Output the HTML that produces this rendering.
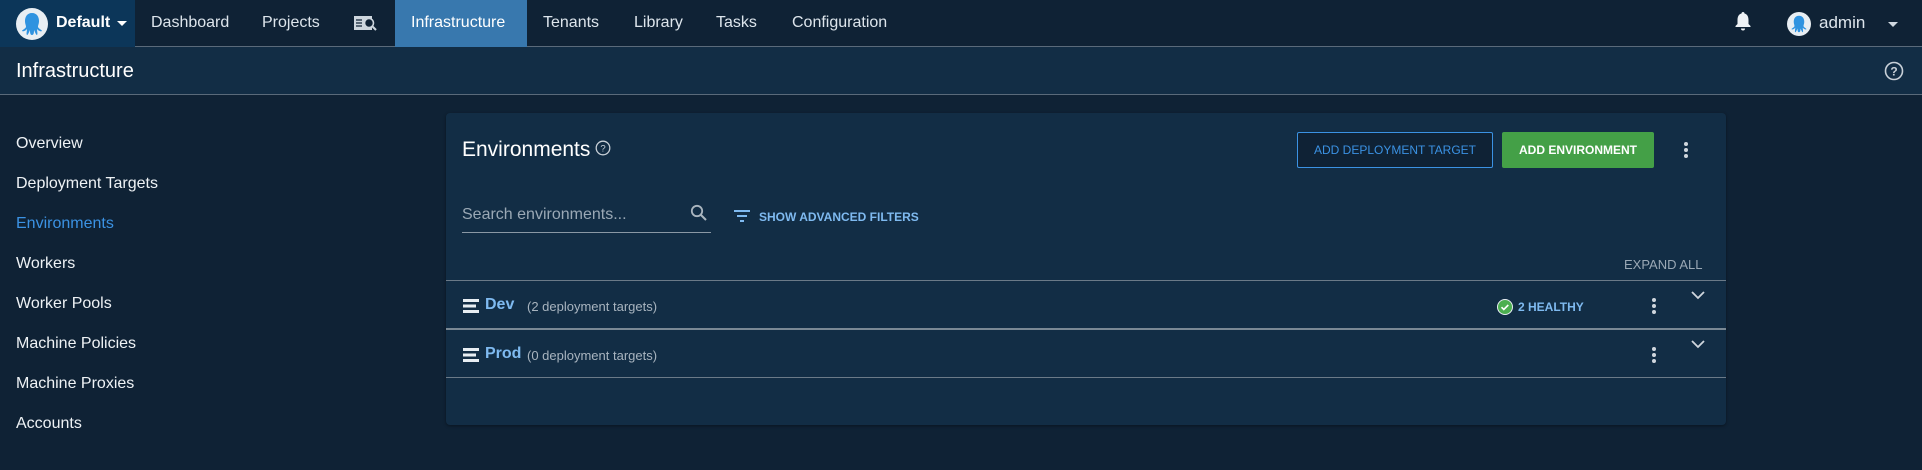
<!DOCTYPE html>
<html><head><meta charset="utf-8"><style>
*{box-sizing:border-box;margin:0;padding:0}
body{width:1922px;height:470px;background:#0f2235;font-family:"Liberation Sans",sans-serif;color:#e6edf3;position:relative;overflow:hidden}
.a{position:absolute;white-space:nowrap}
.nav{position:absolute;left:0;top:0;width:1922px;height:47px;background:#0f2235;border-bottom:1px solid #5a6a7a}
.navt{font-size:16px;color:#dde5ec;top:14px}
.tb{position:absolute;left:0;top:47px;width:1922px;height:48px;background:#122d45;border-bottom:1px solid #5a6a7a}
.side{font-size:16px;color:#eef2f5}
.card{position:absolute;left:446px;top:113px;width:1280px;height:312px;background:#122d45;border-radius:4px;box-shadow:0 1px 3px rgba(0,0,0,.4)}
.ln{position:absolute;left:446px;width:1280px;height:1px;background:#6b7a88}
</style></head><body>
<div class="nav"></div>
<div class="a" style="left:0;top:0;width:135px;height:47px;background:#0c3659"></div>
<svg class="a" style="left:16px;top:8px" width="32" height="32" viewBox="0 0 32 32"><circle cx="16" cy="16" r="16" fill="#e8eef3"/><path d="M16 5c-5 0-7 4-7 8 0 3 1 4 1 6-1 2-4 3-4 4 2 1 4-1 5-2 0 2-1 5 0 6 1 0 2-3 3-5 0 2 0 5 2 5s2-3 2-5c1 2 2 5 3 5 1-1 0-4 0-6 1 1 3 3 5 2 0-1-3-2-4-4 0-2 1-3 1-6 0-4-2-8-7-8z" fill="#2f93e0"/></svg>
<div class="a" style="left:56px;top:14px;font-size:16px;font-weight:bold;color:#fff">Default</div>
<div class="a" style="left:117px;top:21px;border-left:5px solid transparent;border-right:5px solid transparent;border-top:5px solid #fff"></div>
<div class="a navt" style="left:151px">Dashboard</div>
<div class="a navt" style="left:262px">Projects</div>
<svg class="a" style="left:354px;top:15px" width="24" height="17" viewBox="0 0 24 17"><rect x="0" y="1" width="18" height="14" fill="#cdd6de"/><circle cx="15" cy="8" r="4.5" fill="#0f2235" stroke="#cdd6de" stroke-width="1.6"/><path d="M18 11l4 4" stroke="#cdd6de" stroke-width="2"/><path d="M2 5h6M2 8h6M2 11h6" stroke="#0f2235" stroke-width="1.3"/></svg>
<div class="a" style="left:395px;top:0;width:132px;height:47px;background:#3878ae"></div>
<div class="a navt" style="left:411px;color:#fff">Infrastructure</div>
<div class="a navt" style="left:543px">Tenants</div>
<div class="a navt" style="left:634px">Library</div>
<div class="a navt" style="left:716px">Tasks</div>
<div class="a navt" style="left:792px">Configuration</div>
<svg class="a" style="left:1734px;top:11px" width="18" height="20" viewBox="0 0 18 20"><path d="M9 1c-1 0-1.5.7-1.5 1.5C4.5 3.3 3.5 6 3.5 9v4L1.5 15v1h15v-1l-2-2V9c0-3-1-5.7-4-6.5C10.5 1.7 10 1 9 1z" fill="#eef2f5"/><path d="M7 17.5a2 2 0 0 0 4 0z" fill="#eef2f5"/></svg>
<svg class="a" style="left:1787px;top:12px" width="24" height="24" viewBox="0 0 32 32"><circle cx="16" cy="16" r="16" fill="#e8eef3"/><path d="M16 5c-5 0-7 4-7 8 0 3 1 4 1 6-1 2-4 3-4 4 2 1 4-1 5-2 0 2-1 5 0 6 1 0 2-3 3-5 0 2 0 5 2 5s2-3 2-5c1 2 2 5 3 5 1-1 0-4 0-6 1 1 3 3 5 2 0-1-3-2-4-4 0-2 1-3 1-6 0-4-2-8-7-8z" fill="#2f93e0"/></svg>
<div class="a navt" style="left:1819px;top:13px;font-size:17px">admin</div>
<div class="a" style="left:1888px;top:22px;border-left:5px solid transparent;border-right:5px solid transparent;border-top:5px solid #cfd8e0"></div>

<div class="tb"></div>
<div class="a" style="left:16px;top:60px;font-size:20px;color:#fff">Infrastructure</div>
<svg class="a" style="left:1884px;top:61px" width="20" height="20" viewBox="0 0 20 20"><circle cx="10" cy="10" r="8.5" fill="none" stroke="#c8d0d8" stroke-width="1.6"/><text x="10" y="14.5" font-size="12" font-family="Liberation Sans" font-weight="bold" fill="#c8d0d8" text-anchor="middle">?</text></svg>

<div class="a side" style="left:16px;top:135px">Overview</div>
<div class="a side" style="left:16px;top:175px">Deployment Targets</div>
<div class="a side" style="left:16px;top:215px;color:#3b92e3">Environments</div>
<div class="a side" style="left:16px;top:255px">Workers</div>
<div class="a side" style="left:16px;top:295px">Worker Pools</div>
<div class="a side" style="left:16px;top:335px">Machine Policies</div>
<div class="a side" style="left:16px;top:375px">Machine Proxies</div>
<div class="a side" style="left:16px;top:415px">Accounts</div>

<div class="card"></div>
<div class="a" style="left:462px;top:138px;font-size:21px;color:#fff">Environments</div>
<svg class="a" style="left:595px;top:140px" width="16" height="16" viewBox="0 0 20 20"><circle cx="10" cy="10" r="8.5" fill="none" stroke="#c8d0d8" stroke-width="1.6"/><text x="10" y="14.5" font-size="12" font-family="Liberation Sans" fill="#c8d0d8" text-anchor="middle">?</text></svg>
<div class="a" style="left:1297px;top:132px;width:196px;height:36px;border:1px solid #3b92e3;border-radius:2px;background:#0f2235;color:#3b92e3;font-size:12px;text-align:center;line-height:34px">ADD DEPLOYMENT TARGET</div>
<div class="a" style="left:1502px;top:132px;width:152px;height:36px;background:#44a047;border-radius:2px;color:#fff;font-size:12px;font-weight:bold;text-align:center;line-height:36px">ADD ENVIRONMENT</div>
<svg class="a" style="left:1683px;top:140px" width="6" height="20"><circle cx="3" cy="4" r="2" fill="#cfd6dd"/><circle cx="3" cy="10" r="2" fill="#cfd6dd"/><circle cx="3" cy="16" r="2" fill="#cfd6dd"/></svg>

<div class="a" style="left:462px;top:206px;font-size:16px;color:#9aa8b5">Search environments...</div>
<svg class="a" style="left:690px;top:204px" width="18" height="18" viewBox="0 0 18 18"><circle cx="7" cy="7" r="5.2" fill="none" stroke="#aab5bf" stroke-width="1.8"/><path d="M11 11l5 5" stroke="#aab5bf" stroke-width="2"/></svg>
<div class="a" style="left:462px;top:232px;width:249px;height:1px;background:#8a98a5"></div>
<svg class="a" style="left:733px;top:209px" width="18" height="14"><path d="M1 2h16M4 7h10M7 12h4" stroke="#7fbaf0" stroke-width="2"/></svg>
<div class="a" style="left:759px;top:210px;font-size:12px;font-weight:bold;color:#7fbaf0">SHOW ADVANCED FILTERS</div>

<div class="a" style="left:1624px;top:257px;font-size:13px;color:#9aa8b5">EXPAND ALL</div>
<div class="ln" style="top:280px"></div>
<div class="ln" style="top:328px;height:2px;background:#7a8894"></div>
<div class="ln" style="top:377px"></div>

<svg class="a" style="left:463px;top:299px" width="16" height="14"><rect y="0" width="16" height="3" fill="#e8eef3"/><rect y="5.5" width="13" height="3" fill="#e8eef3"/><rect y="11" width="16" height="3" fill="#e8eef3"/></svg>
<div class="a" style="left:485px;top:296px;font-size:16px;font-weight:bold;color:#7fbaf0">Dev</div>
<div class="a" style="left:527px;top:299px;font-size:13px;color:#a8b4bf">(2 deployment targets)</div>
<svg class="a" style="left:1497px;top:299px" width="16" height="16"><circle cx="8" cy="8" r="7.5" fill="#4caf50" stroke="#e8eef3" stroke-width="1"/><path d="M4.5 8.2l2.3 2.3 4.5-4.5" stroke="#fff" stroke-width="1.6" fill="none"/></svg>
<div class="a" style="left:1518px;top:300px;font-size:12px;font-weight:bold;color:#7fbaf0">2 HEALTHY</div>
<svg class="a" style="left:1651px;top:296px" width="6" height="20"><circle cx="3" cy="4" r="2" fill="#cfd6dd"/><circle cx="3" cy="10" r="2" fill="#cfd6dd"/><circle cx="3" cy="16" r="2" fill="#cfd6dd"/></svg>
<svg class="a" style="left:1691px;top:291px" width="14" height="9"><path d="M1 1l6 6 6-6" stroke="#cfd6dd" stroke-width="1.8" fill="none"/></svg>

<svg class="a" style="left:463px;top:348px" width="16" height="14"><rect y="0" width="16" height="3" fill="#e8eef3"/><rect y="5.5" width="13" height="3" fill="#e8eef3"/><rect y="11" width="16" height="3" fill="#e8eef3"/></svg>
<div class="a" style="left:485px;top:345px;font-size:16px;font-weight:bold;color:#7fbaf0">Prod</div>
<div class="a" style="left:527px;top:348px;font-size:13px;color:#a8b4bf">(0 deployment targets)</div>
<svg class="a" style="left:1651px;top:345px" width="6" height="20"><circle cx="3" cy="4" r="2" fill="#cfd6dd"/><circle cx="3" cy="10" r="2" fill="#cfd6dd"/><circle cx="3" cy="16" r="2" fill="#cfd6dd"/></svg>
<svg class="a" style="left:1691px;top:340px" width="14" height="9"><path d="M1 1l6 6 6-6" stroke="#cfd6dd" stroke-width="1.8" fill="none"/></svg>
</body></html>
